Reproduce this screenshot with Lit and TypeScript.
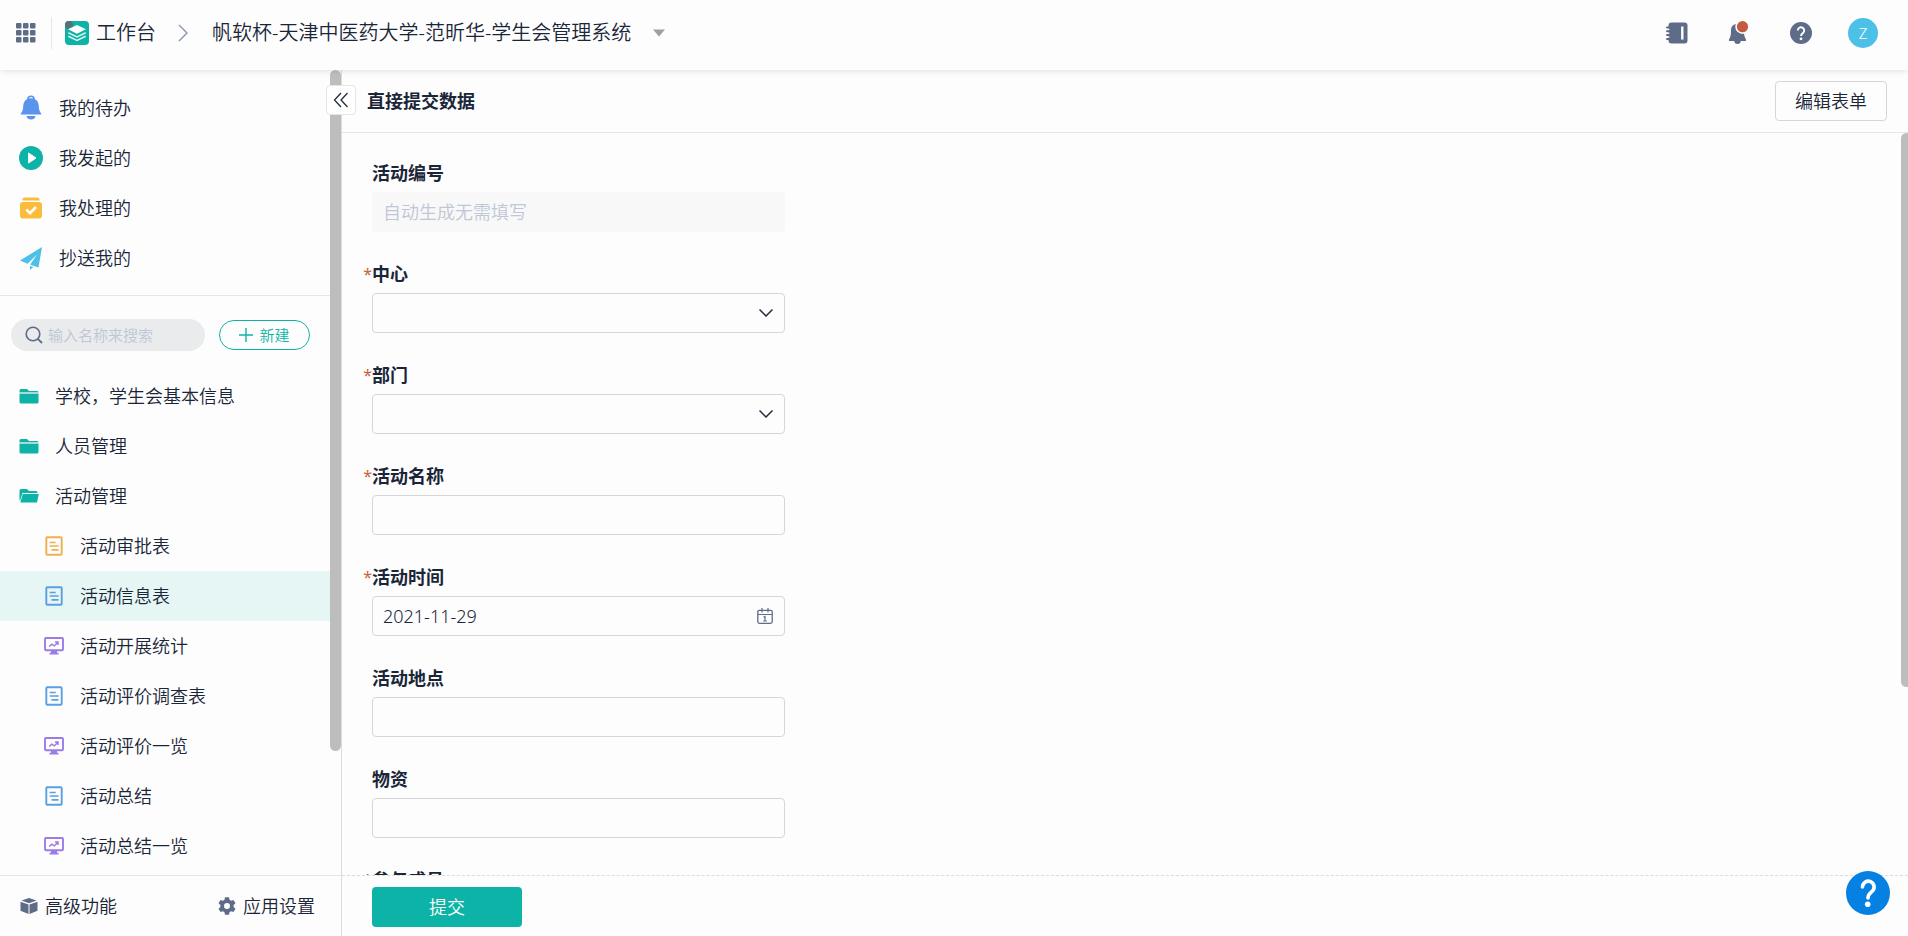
import { LitElement, html, css, svg, nothing } from "lit";
import { customElement, state } from "lit/decorators.js";

type Field = {
  id: string;
  label: string;
  kind: "auto" | "select" | "text" | "date";
  required?: boolean;
  value?: string;
};

const FIELDS: Field[] = [
  { id: "code", label: "活动编号", kind: "auto" },
  { id: "center", label: "中心", kind: "select", required: true },
  { id: "dept", label: "部门", kind: "select", required: true },
  { id: "name", label: "活动名称", kind: "text", required: true },
  { id: "date", label: "活动时间", kind: "date", required: true, value: "2021-11-29" },
  { id: "place", label: "活动地点", kind: "text" },
  { id: "goods", label: "物资", kind: "text" },
  { id: "members", label: "参与成员", kind: "text", required: true },
];

const TODOS = [
  { label: "我的待办", icon: "bell" },
  { label: "我发起的", icon: "play" },
  { label: "我处理的", icon: "done" },
  { label: "抄送我的", icon: "plane" },
];

const FOLDERS = [
  { label: "学校，学生会基本信息", icon: "folder" },
  { label: "人员管理", icon: "folder" },
  { label: "活动管理", icon: "folderOpen" },
];

const ENTRIES = [
  { label: "活动审批表", icon: "form", tone: "orange" },
  { label: "活动信息表", icon: "form", tone: "blue" },
  { label: "活动开展统计", icon: "board", tone: "purple" },
  { label: "活动评价调查表", icon: "form", tone: "blue" },
  { label: "活动评价一览", icon: "board", tone: "purple" },
  { label: "活动总结", icon: "form", tone: "blue" },
  { label: "活动总结一览", icon: "board", tone: "purple" },
];

const SHAPES: Record<string, { w: number; h: number; body: unknown }> = {
  bell: {
    w: 24,
    h: 26,
    body: svg`<path fill="#5a94ec" fill-rule="evenodd" d="M12 .5a4 4 0 0 0-4 3.800C5.200 5.800 4.300 8.500 4.200 11.500 4 15 3.300 16.500 2.200 17.900 1.500 18.800 1.500 19.500 2.500 19.500h19c1 0 1-.7.3-1.600-1.100-1.400-1.800-2.900-2-6.400-.1-3-1-5.700-3.800-7.200A4 4 0 0 0 12 .5zm0 1.600a2.300 2.300 0 0 1 2.200 1.500 9 9 0 0 0-4.400 0A2.300 2.300 0 0 1 12 2.100z"/><path fill="#5a94ec" d="M7.500 21h9a4.600 4.500 0 0 1-9 0z"/>`,
  },
  play: {
    w: 24,
    h: 24,
    body: svg`<circle cx="12" cy="12" r="12" fill="#0db3a6"/><path fill="#fff" stroke="#fff" stroke-linejoin="round" d="M9.500 7v10l7.500-5z"/>`,
  },
  done: {
    w: 22,
    h: 22,
    body: svg`<path fill="#fbbc3c" d="M4.500.5h13a2 2 0 0 1 2 2V3.500h-17v-1a2 2 0 0 1 2-2z"/><rect y="5" width="22" height="16.500" rx="3" fill="#fbbc3c"/><path d="M6.300 12.500l3.700 3.700 6-6.200" fill="none" stroke="#fff" stroke-width="2.600"/>`,
  },
  plane: {
    w: 22,
    h: 23,
    body: svg`<path fill="#4cc0e6" d="M22 0L0 13.500l7.500 3.200L17 7.500 10.200 17.800l8.300 2.700z"/><path fill="#4cc0e6" d="M10 19v4l3.300-2.900z"/>`,
  },
  folder: {
    w: 20,
    h: 16,
    body: svg`<path fill="#0db3a6" d="M2 1h6l2 2h8a1.500 1.500 0 0 1 1.500 1.200H.5V2.500A1.500 1.500 0 0 1 2 1z"/><path fill="#0db3a6" d="M.5 5.800h19v8.200a1.500 1.500 0 0 1-1.500 1.500H2A1.500 1.500 0 0 1 .5 14z"/><path fill="#a8d0cc" d="M.5 4.300h19v1.500H.5z"/>`,
  },
  folderOpen: {
    w: 20,
    h: 16,
    body: svg`<path fill="#0db3a6" d="M2 1h6l2 2h7a1.500 1.500 0 0 1 1.500 1.500V5H3.500L1.200 12.500.5 12V2.500A1.500 1.500 0 0 1 2 1z"/><path fill="#0db3a6" d="M3.800 6H19.800L18 14.500H1.300z"/>`,
  },
  form: {
    w: 18,
    h: 20,
    body: svg`<rect x="1.300" y="1.300" width="15.400" height="17.400" rx="1" fill="none" stroke="currentColor" stroke-width="1.900"/><path d="M4.700 6.500h6M4.700 10h9M6.500 13.800h7" stroke="currentColor" stroke-width="1.700"/>`,
  },
  board: {
    w: 20,
    h: 18,
    body: svg`<rect x="1" y="1" width="18" height="12.200" rx="1" fill="none" stroke="currentColor" stroke-width="1.900"/><path d="M5.200 9.500l2.500-2.300 2.600 1.700 3.300-3.500M11 5h3v3" fill="none" stroke="currentColor" stroke-width="1.500"/><path fill="currentColor" d="M7 13.500h6v2.200h1.500V17.500h-9v-1.800H7z"/>`,
  },
  cube: {
    w: 18,
    h: 18,
    body: svg`<path fill="#5f6c87" d="M9 1l7.500 2.600L9 6.200 1.500 3.600zM.5 4.700l8 2.800v9.500l-8-3.300zM17.500 4.700l-8 2.800v9.500l8-3.300z"/>`,
  },
  gear: {
    w: 18,
    h: 18,
    body: svg`<path fill="#5f6c87" fill-rule="evenodd" d="M7 .3h4l.5 2.500 1.600.9 2.400-.8 2 3.400-1.900 1.700v2l1.900 1.700-2 3.400-2.400-.8-1.600.9-.5 2.500H7l-.5-2.500-1.600-.9-2.400.8-2-3.400L2.400 10V8L.5 6.300l2-3.400 2.400.8 1.600-.9zM9 6a3 3 0 1 0 0 6 3 3 0 0 0 0-6z"/>`,
  },
  apps: {
    w: 20,
    h: 20,
    body: svg`${[0, 7, 14].map((y) => [0, 7, 14].map((x) => svg`<rect x=${x} y=${y} width="5.500" height="5.500" rx="1" fill="#5f6c87"/>`))}`,
  },
  logo: {
    w: 24,
    h: 24,
    body: svg`<rect width="24" height="24" rx="4" fill="#0db3a6"/><rect width="8" height="8" rx="4" fill="#54727c"/><path fill="#fff" d="M12 4l9 4.300-9 4.400-9-4.400z"/><path d="M3.300 11.700l8.700 4.200 8.700-4.200M3.300 15.200l8.700 4.200 8.700-4.200" fill="none" stroke="#d8f3f0" stroke-width="1.500"/>`,
  },
  crumb: {
    w: 10,
    h: 18,
    body: svg`<path d="M1 1l8 8-8 8" fill="none" stroke="#8d99ae" stroke-width="1.500"/>`,
  },
  caret: { w: 12, h: 8, body: svg`<path fill="#9aa0a6" d="M0 .5h12L6 7.500z"/>` },
  book: {
    w: 22,
    h: 22,
    body: svg`<rect x="2.500" y=".5" width="19" height="21" rx="3" fill="#5f6c87"/><path d="M1 5.500h4M1 9.300h4M1 13.100h4M1 16.900h4" stroke="#5f6c87" stroke-width="2" stroke-linecap="round"/><path d="M3.500 7.400h-3M3.500 11.200h-3M3.500 15h-3" stroke="#fdfdfd" stroke-width="1"/><path d="M16.300 4.500v13" stroke="#fff" stroke-width="2.400"/>`,
  },
  alert: {
    w: 22,
    h: 24,
    body: svg`<path fill="#5f6c87" d="M9.500 3C5 3 3 5.500 3 9.500c0 4-.3 6-1.500 8-.6 1-1 2.500 0 2.500h16c1 0 .6-1.500 0-2.500C16.300 15.500 16 13.500 16 9.500c0-4-2-6.500-6.500-6.500zM6.300 20h6.400a3.200 3 0 0 1-6.400 0z"/><circle cx="14.500" cy="5.700" r="7.200" fill="#fdfdfd"/><circle cx="14.500" cy="5.700" r="5.600" fill="#c25b40"/>`,
  },
  ask: {
    w: 22,
    h: 22,
    body: svg`<circle cx="11" cy="11" r="11" fill="#5f6c87"/><path d="M7.800 8.500a3.200 3.200 0 1 1 5.200 2.500c-1.300 1-2 1.500-2 3" fill="none" stroke="#fff" stroke-width="1.900"/><circle cx="11" cy="16.800" r="1.400" fill="#fff"/>`,
  },
  help: {
    w: 44,
    h: 44,
    body: svg`<circle cx="22" cy="22" r="22" fill="#0580e3"/><path d="M16.500 16a5.800 5.800 0 1 1 9.800 4.200c-2.300 2-4.300 3.200-4.300 6.800" fill="none" stroke="#fff" stroke-width="3.600" stroke-linecap="round"/><circle cx="21.700" cy="33.300" r="2.800" fill="#fff"/>`,
  },
  search: {
    w: 18,
    h: 18,
    body: svg`<circle cx="8" cy="8" r="6.800" fill="none" stroke="#5f6c87" stroke-width="1.600"/><path d="M12.800 12.800L17 17" stroke="#5f6c87" stroke-width="1.800"/>`,
  },
  plus: { w: 14, h: 14, body: svg`<path d="M7 0v14M0 7h14" stroke="#0db3a6" stroke-width="1.400"/>` },
  fold: {
    w: 16,
    h: 16,
    body: svg`<path d="M8 1L1.500 8 8 15M14.500 1L8 8l6.500 7" fill="none" stroke="#1f2d3d" stroke-width="1.300"/>`,
  },
  down: {
    w: 14,
    h: 8,
    body: svg`<path d="M.5.5L7 7 13.500.5" fill="none" stroke="#1f2d3d" stroke-width="1.500"/>`,
  },
  calendar: {
    w: 16,
    h: 16,
    body: svg`<rect x=".8" y="2.300" width="14.400" height="13" rx="1.500" fill="none" stroke="#5f6c87" stroke-width="1.300"/><path d="M1 6.500h14M5 0v4.500M11 0v4.500M6.500 9.300l1.500-.8v4.500M6.200 13h3.600" fill="none" stroke="#5f6c87" stroke-width="1.200"/>`,
  },
};

const icon = (name: string) => {
  const s = SHAPES[name];
  return html`<svg width=${s.w} height=${s.h} viewBox="0 0 ${s.w} ${s.h}" aria-hidden="true">${s.body}</svg>`;
};

@customElement("app-root")
export class AppRoot extends LitElement {
  @state() private active = "活动信息表";

  static styles = css`
    :host {
      --ink: #1a2638;
      --teal: #0db3a6;
      --line: #e6e6e6;
      --edge: #d6d6d6;
      display: grid;
      grid-template: auto minmax(0, 1fr) / 342px minmax(0, 1fr);
      height: 100vh;
      overflow: hidden;
      background: #fdfdfd;
      color: var(--ink);
      font: 350 18px/24px "Noto Sans", "Noto Sans CJK SC", sans-serif;
    }
    * {
      box-sizing: border-box;
    }
    svg {
      display: block;
      flex: none;
    }
    button,
    input,
    select {
      font: inherit;
      color: inherit;
      margin: 0;
    }
    button {
      cursor: pointer;
    }
    a {
      color: inherit;
      text-decoration: none;
    }
    .plain {
      border: 0;
      padding: 0;
      background: none;
    }
    .top {
      grid-column: 1 / -1;
      z-index: 2;
      display: flex;
      align-items: center;
      height: 70px;
      padding: 0 14px 4px 16px;
      background: #fdfdfd;
      box-shadow: 0 1px 6px rgba(0, 0, 0, 0.12);
      font-size: 20px;
    }
    .split {
      width: 1px;
      height: 32px;
      margin: 0 13px 0 15px;
      background: var(--line);
    }
    .home {
      display: flex;
      align-items: center;
      gap: 7px;
      margin-right: 22px;
    }
    .app {
      display: flex;
      align-items: center;
      gap: 22px;
      margin-left: 24px;
    }
    .tools {
      display: grid;
      grid-template-columns: repeat(4, 62px);
      place-items: center;
      margin-left: auto;
    }
    .avatar {
      width: 30px;
      height: 30px;
      border-radius: 50%;
      background: #4cc0e6;
      color: #fff;
      font-size: 15px;
    }
    .side {
      display: flex;
      flex-direction: column;
      min-height: 0;
      border-right: 1px solid #dcdcdc;
      position: relative;
    }
    .scroll {
      flex: 1;
      min-height: 0;
      overflow: hidden;
      padding-right: 11px;
    }
    .bar {
      position: absolute;
      background: #bdbdbd;
      border-radius: 6px;
    }
    .side .bar {
      top: 0;
      right: 0;
      width: 11px;
      height: 681px;
    }
    .fold {
      position: absolute;
      top: 15px;
      right: -15px;
      z-index: 1;
      display: grid;
      place-items: center;
      width: 30px;
      height: 30px;
      border: 1px solid var(--line);
      border-radius: 4px;
      background: #fff;
      padding: 0;
    }
    .list {
      list-style: none;
      margin: 0;
      padding: 0;
    }
    .todos {
      padding: 13px 0 12px;
      border-bottom: 1px solid var(--line);
    }
    .row {
      display: flex;
      align-items: center;
      height: 50px;
      padding-left: 19px;
    }
    .glyph {
      display: grid;
      place-items: center;
      width: 24px;
      margin-right: 16px;
    }
    .folder .glyph {
      width: 20px;
    }
    .entry {
      padding-left: 44px;
    }
    .entry .glyph {
      width: 20px;
    }
    .entry.on {
      background: #e5f6f5;
    }
    .orange {
      color: #f2b04c;
    }
    .blue {
      color: #5ba0de;
    }
    .purple {
      color: #9b7be6;
    }
    .find {
      display: flex;
      align-items: center;
      gap: 14px;
      padding: 23px 20px 20px 11px;
      font-size: 15px;
    }
    .search {
      flex: 1;
      min-width: 0;
      display: flex;
      align-items: center;
      gap: 5px;
      height: 32px;
      padding: 0 14px;
      border-radius: 16px;
      background: #e9ebed;
    }
    .search input {
      flex: 1;
      min-width: 0;
      border: 0;
      padding: 0;
      background: none;
      outline: none;
    }
    ::placeholder {
      color: #bec7d5;
      opacity: 1;
    }
    .create {
      display: flex;
      align-items: center;
      justify-content: center;
      gap: 6px;
      width: 91px;
      height: 30px;
      padding: 0;
      border: 1px solid var(--teal);
      border-radius: 15px;
      background: none;
      color: var(--teal);
    }
    .foot {
      display: flex;
      justify-content: space-between;
      align-items: center;
      height: 61px;
      padding: 0 26px 0 20px;
      border-top: 1px solid var(--line);
    }
    .foot a {
      display: flex;
      align-items: center;
      gap: 7px;
    }
    .main {
      display: flex;
      flex-direction: column;
      min-width: 0;
      min-height: 0;
    }
    .head {
      display: flex;
      align-items: center;
      justify-content: space-between;
      height: 63px;
      padding: 0 21px 0 25px;
      border-bottom: 1px solid var(--line);
    }
    h1 {
      margin: 0;
      font-size: 18px;
      font-weight: 700;
    }
    .edit {
      height: 40px;
      padding: 0 19px;
      border: 1px solid var(--edge);
      border-radius: 4px;
      background: #fdfdfd;
    }
    .form {
      position: relative;
      flex: 1;
      min-height: 0;
      overflow: hidden;
      padding: 28px 30px 0;
    }
    .form .bar {
      top: 0;
      right: -4px;
      width: 11px;
      height: 554px;
    }
    .fields {
      display: grid;
      gap: 30px;
      max-width: 413px;
    }
    .field {
      display: grid;
      gap: 7px;
    }
    .field label {
      position: relative;
      font-weight: 700;
    }
    .star {
      position: absolute;
      right: 100%;
      color: #c8623a;
      font-size: 16px;
      font-weight: 400;
    }
    .box {
      display: grid;
      align-items: center;
    }
    .box > * {
      grid-area: 1 / 1;
    }
    .box svg {
      justify-self: end;
      margin-right: 12px;
      pointer-events: none;
    }
    .ctl {
      width: 100%;
      height: 40px;
      padding: 0 10px;
      border: 1px solid var(--edge);
      border-radius: 4px;
      background: #fdfdfd;
      appearance: none;
    }
    .ctl:disabled {
      border-color: #f8f8f8;
      background: #f8f8f8;
    }
    .submit {
      height: 61px;
      padding: 11px 30px;
      border-top: 1px dashed #dcdcdc;
    }
    .send {
      width: 150px;
      height: 40px;
      border: 0;
      border-radius: 4px;
      background: var(--teal);
      color: #fff;
    }
    .help {
      position: absolute;
      right: 18px;
      bottom: 21px;
      z-index: 3;
    }
  `;

  private control(f: Field) {
    if (f.kind === "select") {
      return html`<select class="ctl" id=${f.id}><option></option></select>${icon("down")}`;
    }
    return html`<input
        class="ctl"
        id=${f.id}
        type="text"
        .value=${f.value ?? ""}
        placeholder=${f.kind === "auto" ? "自动生成无需填写" : nothing}
        ?disabled=${f.kind === "auto"}
      />${f.kind === "date" ? icon("calendar") : nothing}`;
  }

  render() {
    return html`
      <header class="top">
        <button class="plain" aria-label="应用">${icon("apps")}</button>
        <span class="split"></span>
        <a class="home" href="#">${icon("logo")}工作台</a>
        ${icon("crumb")}
        <button class="plain app">帆软杯-天津中医药大学-范昕华-学生会管理系统${icon("caret")}</button>
        <div class="tools">
          <button class="plain" aria-label="通讯录">${icon("book")}</button>
          <button class="plain" aria-label="消息">${icon("alert")}</button>
          <button class="plain" aria-label="帮助">${icon("ask")}</button>
          <button class="plain avatar">Z</button>
        </div>
      </header>

      <aside class="side">
        <nav class="scroll">
          <ul class="list todos">
            ${TODOS.map(
              (t) => html`<li><a class="row" href="#"><span class="glyph">${icon(t.icon)}</span>${t.label}</a></li>`
            )}
          </ul>
          <div class="find">
            <label class="search">${icon("search")}<input type="search" aria-label="搜索" placeholder="输入名称来搜索" /></label>
            <button class="create">${icon("plus")}新建</button>
          </div>
          <ul class="list">
            ${FOLDERS.map(
              (t) => html`<li><a class="row folder" href="#"><span class="glyph">${icon(t.icon)}</span>${t.label}</a></li>`
            )}
            ${ENTRIES.map(
              (t) => html`<li>
                <a class="row entry ${t.label === this.active ? "on" : ""}" href="#" @click=${() => (this.active = t.label)}
                  ><span class="glyph ${t.tone}">${icon(t.icon)}</span>${t.label}</a
                >
              </li>`
            )}
          </ul>
        </nav>
        <span class="bar"></span>
        <button class="fold" aria-label="收起">${icon("fold")}</button>
        <div class="foot">
          <a href="#">${icon("cube")}高级功能</a>
          <a href="#">${icon("gear")}应用设置</a>
        </div>
      </aside>

      <main class="main">
        <div class="head">
          <h1>直接提交数据</h1>
          <button class="edit">编辑表单</button>
        </div>
        <div class="form">
          <div class="fields">
            ${FIELDS.map(
              (f) => html`<div class="field">
                <label for=${f.id}>${f.required ? html`<span class="star">*</span>` : nothing}${f.label}</label>
                <div class="box">${this.control(f)}</div>
              </div>`
            )}
          </div>
          <span class="bar"></span>
        </div>
        <div class="submit"><button class="send">提交</button></div>
      </main>
      <button class="plain help" aria-label="在线帮助">${icon("help")}</button>
    `;
  }
}
